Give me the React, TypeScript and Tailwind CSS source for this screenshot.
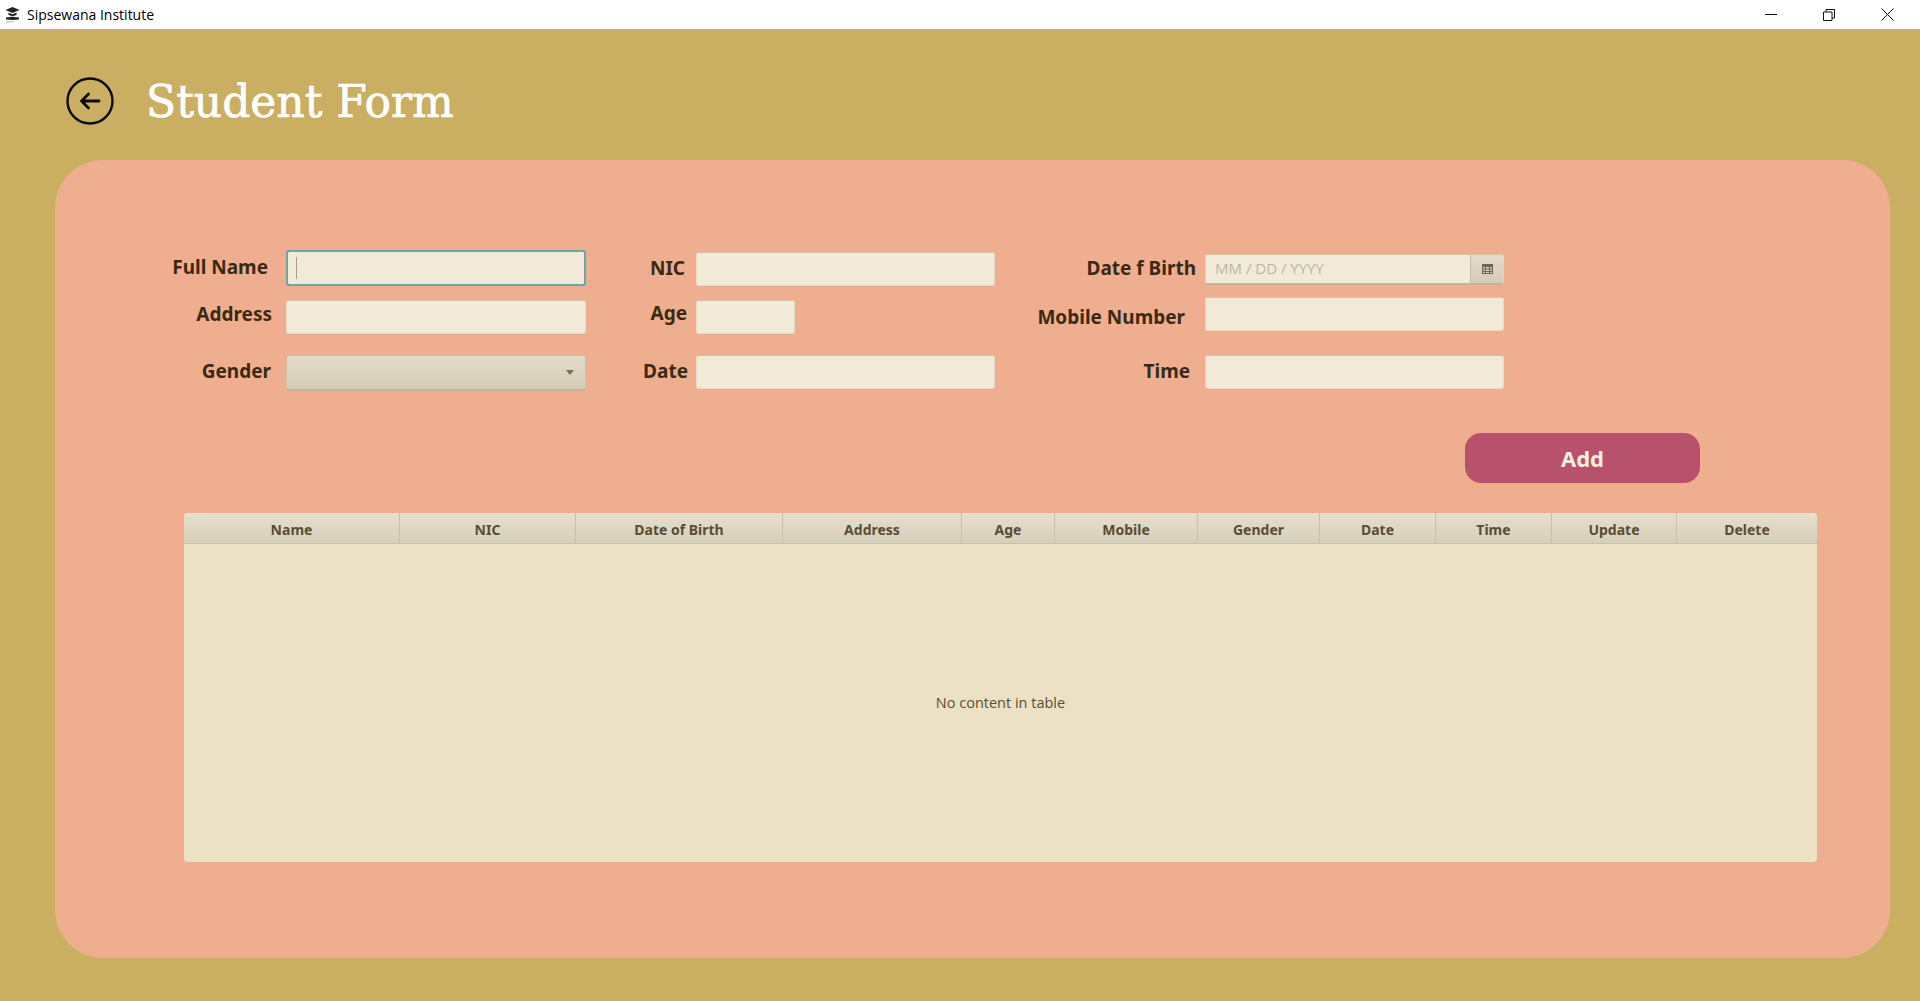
import React from 'react';

const columns = ['Name', 'NIC', 'Date of Birth', 'Address', 'Age', 'Mobile', 'Gender', 'Date', 'Time', 'Update', 'Delete'];

const inputClass = "bg-[#f2ead9] rounded-[3px] border border-[#e6d9c2] border-t-[#d2c4aa]";

function Label({ text, className }: { text: string; className: string }) {
  return (
    <span className={`font-['Noto_Sans',sans-serif] font-bold text-[19px] leading-none text-[#3a2a14] whitespace-nowrap ${className}`}>
      {text}
    </span>
  );
}

function Field({ label, labelClass, className, children }: { label: string; labelClass: string; className: string; children: React.ReactNode }) {
  return (
    <div className={`flex items-center justify-end ${className}`}>
      <Label text={label} className={labelClass} />
      {children}
    </div>
  );
}

export default function App() {
  return (
    <div className="h-[1001px] w-[1920px] overflow-hidden bg-[#caae62] flex flex-col">
      {/* Window title bar */}
      <div className="h-[29px] bg-white flex items-center justify-between">
        <div className="flex items-center pl-[5px] gap-[7px]">
          <svg width="15" height="17" viewBox="0 0 15 17" fill="#222">
            <path d="M7.5 1 14.5 4 7.5 7 .5 4Z" />
            <path d="M3.5 6.5 7.5 8.2 11.5 6.5V9L7.5 10.3 3.5 9Z" />
            <path d="M1 11.5 7 10.8 14 11.5V13.5L7.5 14 1 13.5Z" />
            <path d="M1 15.5H9V16.3H1Z" fill="#999" />
          </svg>
          <span className="font-['Open_Sans',sans-serif] text-[14px] text-black">Sipsewana Institute</span>
        </div>
        <div className="flex items-center pr-[26px] gap-[46px]">
          <svg width="12" height="12" viewBox="0 0 12 12" stroke="#111" fill="none"><path d="M0 5.5H12" /></svg>
          <svg width="12" height="12" viewBox="0 0 12 12" stroke="#111" fill="none">
            <path d="M.5 3h8.500v8.500H.5Z" />
            <path d="M3 3V.5h8.500V9H9" />
          </svg>
          <svg width="13" height="13" viewBox="0 0 13 13" stroke="#111" fill="none"><path d="M.5.5 12.500 12.500M12.500.5.5 12.500" /></svg>
        </div>
      </div>

      {/* Page heading */}
      <div className="h-[131px] pt-[13px] pl-[66px] flex items-center gap-[32px]">
        <svg width="48" height="48" viewBox="0 0 48 48" fill="none" stroke="#0c0a05" strokeWidth="2.400" strokeLinecap="round" strokeLinejoin="round">
          <circle cx="24" cy="24" r="22.500" />
          <path d="M33 24H16M22.500 17 15.500 24 22.500 31" strokeWidth="2.800" />
        </svg>
        <h1 className="font-['DejaVu_Serif',serif] text-[44px] leading-none pt-[2px] text-white [-webkit-text-stroke:0.7px_white]">Student Form</h1>
      </div>

      {/* Main panel */}
      <div className="ml-[55px] w-[1835px] h-[798px] rounded-[48px] bg-[#efae90] pt-[90px] flex flex-col">
        <div className="flex pl-[111px] h-[140px]">
          <div className="w-[420px] flex flex-col">
            <Field label="Full Name" labelClass="mr-[18px] mb-[2px]" className="h-[36px]">
              <div className="w-[300px] h-[36px] bg-[#f2ead9] rounded-[3px] border-2 border-[#67a8a8] pl-[8px] py-[5px]">
                <div className="w-[1px] h-[22px] bg-[#a89f8d]" />
              </div>
            </Field>
            <Field label="Address" labelClass="mr-[14px] mb-[6px]" className="h-[34px] mt-[14px]">
              <div className={`w-[300px] h-[34px] ${inputClass}`} />
            </Field>
            <Field label="Gender" labelClass="mr-[15px] mb-[4px]" className="h-[36px] mt-[21px]">
              <div className="w-[300px] h-[36px] rounded-[3px] bg-gradient-to-b from-[#e4dccb] to-[#d5ccb8] border border-[#cbbfa6] border-b-2 border-b-[#c2b59a] flex items-center justify-end pr-[11px]">
                <div className="w-0 h-0 border-x-[4px] border-x-transparent border-t-[5px] border-t-[#7a705c]" />
              </div>
            </Field>
          </div>

          <div className="w-[355px] ml-[54px] flex flex-col pt-[2px]">
            <Field label="NIC" labelClass="mr-[11px] mb-[2px]" className="h-[34px]">
              <div className={`w-[299px] h-[34px] ${inputClass}`} />
            </Field>
            <div className="h-[34px] mt-[14px] flex items-center">
              <div className="w-[56px] flex justify-end">
                <Label text="Age" className="mr-[9px] mb-[8px]" />
              </div>
              <div className={`w-[99px] h-[34px] ${inputClass}`} />
            </div>
            <Field label="Date" labelClass="mr-[8px] mb-[2px]" className="h-[34px] mt-[21px]">
              <div className={`w-[299px] h-[34px] ${inputClass}`} />
            </Field>
          </div>

          <div className="w-[474px] ml-[35px] flex flex-col pt-[4px]">
            <Field label="Date f Birth" labelClass="mr-[9px] mb-[2px]" className="h-[31px]">
              <div className="w-[299px] h-[31px] flex rounded-[3px] bg-[#f2ead9] border border-[#e3d5bd] border-t-[#d2c4aa] border-b-2 border-b-[#c2b59a]">
                <div className="flex-1 pl-[9px] font-['Open_Sans',sans-serif] text-[15px] leading-[26px] text-[#bdb5a3]">MM / DD / YYYY</div>
                <div className="w-[33px] bg-gradient-to-b from-[#e4dccb] to-[#d5ccb8] border-l border-[#c4b9a3] flex items-center justify-center">
                  <svg width="11" height="10" viewBox="0 0 11 10" fill="#6f6552">
                    <path d="M0 0H11V10H0Z" />
                    <path d="M1 3H3V4.500H1ZM4 3H7V4.500H4ZM8 3H10V4.500H8ZM1 5.500H3V7H1ZM4 5.500H7V7H4ZM8 5.500H10V7H8ZM1 8H3V9H1ZM4 8H7V9H4ZM8 8H10V9H8Z" fill="#d8d0bd" />
                  </svg>
                </div>
              </div>
            </Field>
            <Field label="Mobile Number" labelClass="mr-[20px] mt-[6px]" className="h-[34px] mt-[12px]">
              <div className={`w-[299px] h-[34px] ${inputClass}`} />
            </Field>
            <Field label="Time" labelClass="mr-[15px] mb-[2px]" className="h-[34px] mt-[24px]">
              <div className={`w-[299px] h-[34px] ${inputClass}`} />
            </Field>
          </div>
        </div>

        <div className="flex justify-end pr-[190px] mt-[43px]">
          <button className="w-[235px] h-[50px] rounded-[16px] bg-[#b8526c] font-['Noto_Sans',sans-serif] font-bold text-[22px] text-[#fbeee0]">Add</button>
        </div>

        {/* Student table */}
        <div className="ml-[129px] mt-[30px] w-[1633px] h-[349px] flex flex-col rounded-[4px] overflow-hidden bg-[#ece1c4]">
          <div className="grid grid-cols-[216px_176px_207px_179px_93px_143px_122px_116px_116px_125px_140px] h-[31px] bg-gradient-to-b from-[#e6dfcd] to-[#d6cfba] border-b border-[#c9c0aa]">
            {columns.map((col, idx) => (
              <div key={idx} className="flex items-center justify-center pt-[2px] border-r border-[#c9c0aa] last:border-r-0 font-['Noto_Sans',sans-serif] font-bold text-[14px] text-[#5a4c35]">
                {col}
              </div>
            ))}
          </div>
          <div className="flex-1 flex items-center justify-center font-['Open_Sans',sans-serif] text-[14.500px] text-[#5a4c35]">
            No content in table
          </div>
        </div>
      </div>
    </div>
  );
}
